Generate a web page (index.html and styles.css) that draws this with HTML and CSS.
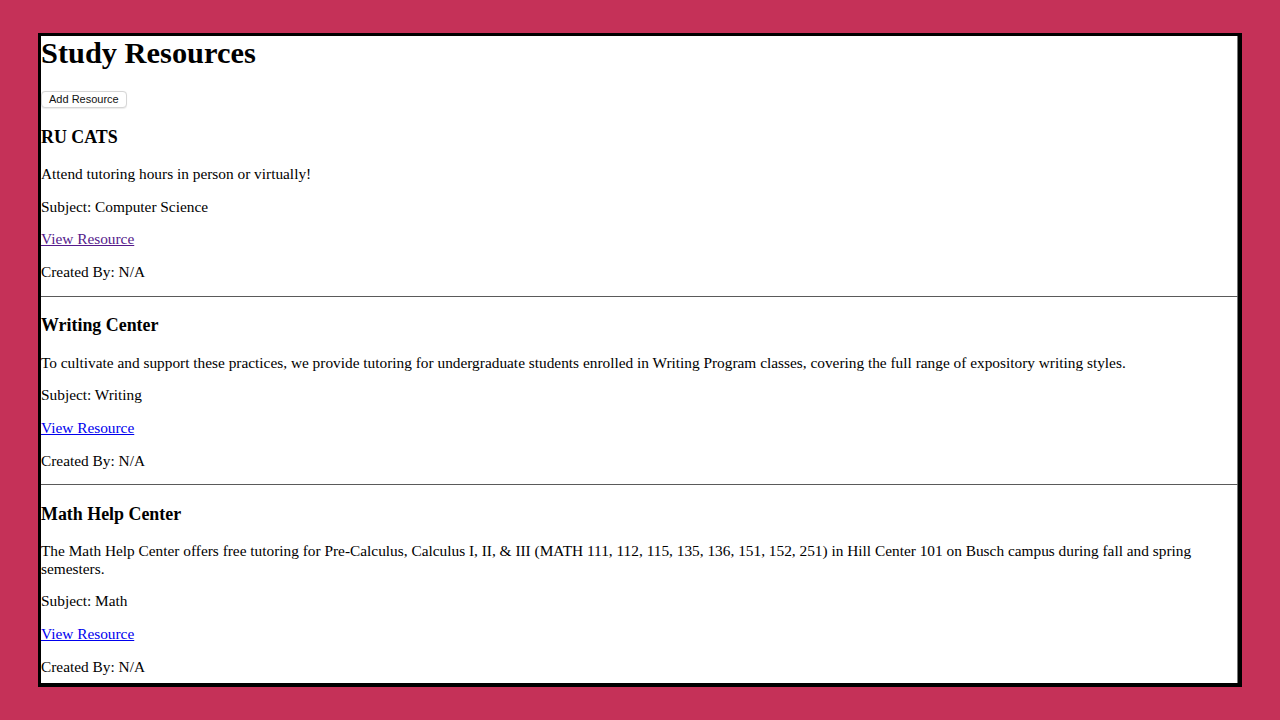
FILE: index.html
```html
<!DOCTYPE html>
<html>
<head>
<meta charset="utf-8">
<title>Study Resources</title>
<link rel="stylesheet" href="styles.css">
</head>
<body>
<div class="frame">
  <h1 class="title">Study Resources</h1>
  <button class="add-btn">Add Resource</button>
  <div class="resource">
    <h3 class="res-name">RU CATS</h3>
    <p class="res-line">Attend tutoring hours in person or virtually!</p>
    <p class="res-line">Subject: Computer Science</p>
    <p class="res-line"><a class="res-link visited" href="#">View Resource</a></p>
    <p class="res-line">Created By: N/A</p>
  </div>
  <div class="resource">
    <h3 class="res-name">Writing Center</h3>
    <p class="res-line">To cultivate and support these practices, we provide tutoring for undergraduate students enrolled in Writing Program classes, covering the full range of expository writing styles.</p>
    <p class="res-line">Subject: Writing</p>
    <p class="res-line"><a class="res-link" href="#">View Resource</a></p>
    <p class="res-line">Created By: N/A</p>
  </div>
  <div class="resource">
    <h3 class="res-name">Math Help Center</h3>
    <p class="res-line">The Math Help Center offers free tutoring for Pre-Calculus, Calculus I, II, &amp; III (MATH 111, 112, 115, 135, 136, 151, 152, 251) in Hill Center 101 on Busch campus during fall and spring semesters.</p>
    <p class="res-line">Subject: Math</p>
    <p class="res-line"><a class="res-link" href="#">View Resource</a></p>
    <p class="res-line">Created By: N/A</p>
  </div>
</div>
</body>
</html>
```

FILE: styles.css
```css
html, body {
  margin: 0;
  padding: 0;
}
body {
  background: #c53158;
  height: 720px;
  overflow: hidden;
  padding-top: 33px;
  box-sizing: border-box;
  font-family: "Liberation Serif", "Times New Roman", serif;
  color: #000;
}
.frame {
  margin-left: 38px;
  width: 1197px;
  height: 647px;
  border-style: solid;
  border-color: #000;
  border-width: 3px 4px 4px 3px;
  background: #fff;
  overflow: hidden;
  box-shadow: inset -1px 0 0 #777;
}
.title {
  margin: 0 0 20.4px 0;
  font-size: 30.4px;
  line-height: 1.15;
  font-weight: bold;
}
.add-btn {
  display: block;
  margin: 0;
  font-family: "Liberation Sans", Arial, sans-serif;
  font-size: 11px;
  line-height: 13px;
  padding: 1px 7px;
  background: #fff;
  border: 1px solid #d6d6d6;
  border-radius: 4px;
  color: #111;
  box-shadow: 0 0.5px 1px rgba(0,0,0,0.08);
}
.resource {
  border-bottom: 1px solid #5a5a5a;
}
.res-name {
  margin: 18.6px 0 17.6px;
  font-size: 17.9px;
  line-height: 1.15;
  font-weight: bold;
}
.res-line {
  margin: 15.1px 0;
  font-size: 15.35px;
  line-height: 17.6px;
}
.res-link {
  color: #0000ee;
  text-decoration: underline;
}
.res-link.visited {
  color: #551a8b;
}
```
